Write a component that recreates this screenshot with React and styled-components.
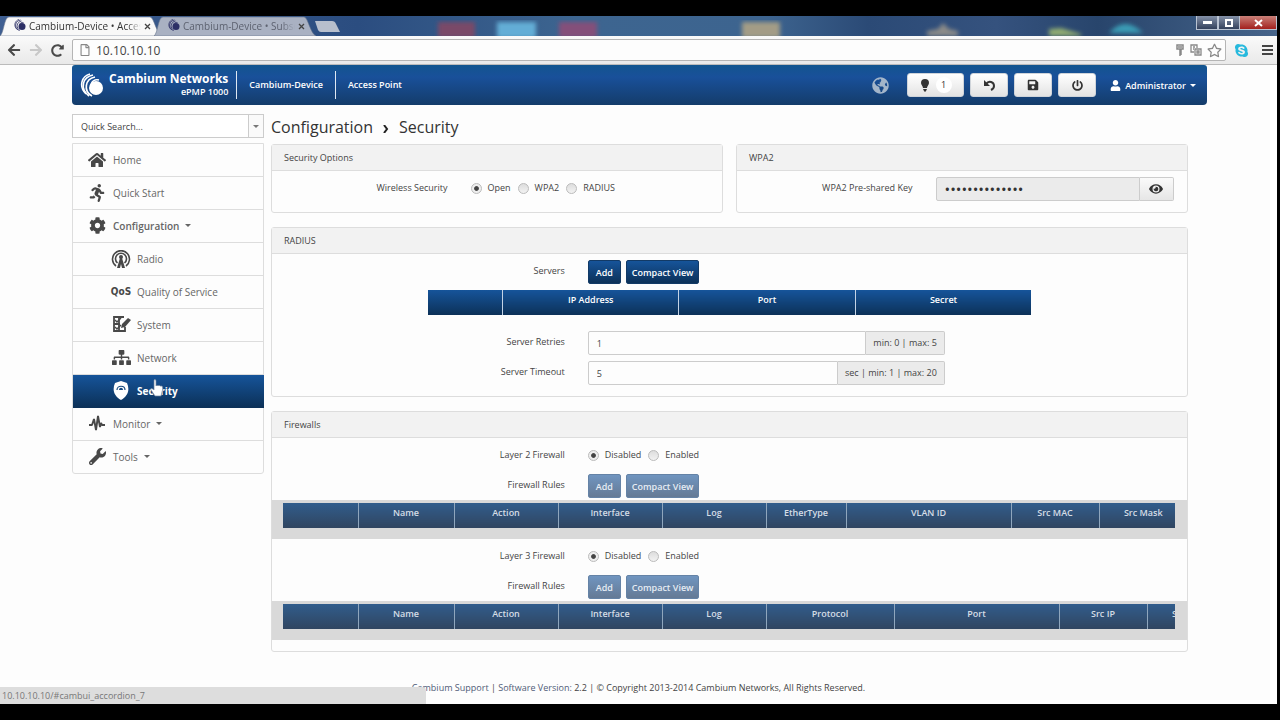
import React from 'react';
import styled, { createGlobalStyle, css } from 'styled-components';
import {
  FaArrowLeft, FaArrowRight, FaCog, FaEye, FaGlobeAmericas, FaHome, FaPowerOff,
  FaRedoAlt, FaRegFile, FaRegStar, FaRunning, FaSave, FaSitemap, FaSkype, FaUser, FaWrench,
} from 'react-icons/fa';

const GlobalStyle = createGlobalStyle`
  * {
    box-sizing: border-box;
  }
  body {
    margin: 0;
    background: #000;
    color: #444;
    font-family: "Open Sans", "Noto Sans", sans-serif;
    font-size: 9px;
  }
  button, input {
    font-family: inherit;
    font-size: inherit;
    color: inherit;
    margin: 0;
  }
  a {
    color: inherit;
    text-decoration: none;
  }
`;

const blue = 'linear-gradient(#16549a, #0c3158)';

const Window = styled.div`
  position: relative;
  display: flex;
  flex-direction: column;
  min-height: 100vh;
  border: solid #000;
  border-width: 16px 3px 16px 0;
  background: #fdfdfd;
`;

/* browser frame */
const TabStrip = styled.div`
  position: relative;
  display: flex;
  height: 20px;
  overflow: hidden;
  background: linear-gradient(90deg, #3f5f92 0%, #2b4d80 28%, #3d6590 45%, #3d648f 60%, #2b4a76 68%, #35527e 78%, #28456c 86%, #46648a 100%);
`;
const Desktop = styled.svg`
  position: absolute;
  left: 0;
  top: 0;
`;
const Tab = styled.a`
  position: relative;
  display: flex;
  align-items: center;
  width: 154px;
  height: 20px;
  padding: 0 3px 0 14px;
  gap: 3px;
  color: ${props => (props.$active ? '#333' : '#5d6270')};
`;
const TabShape = styled.svg`
  position: absolute;
  left: 0;
  top: 0;
`;
const TabTitle = styled.span`
  position: relative;
  flex: 1;
  overflow: hidden;
  white-space: nowrap;
  font-size: 10px;
  line-height: 18px;
  mask-image: linear-gradient(90deg, #000 88%, transparent);
`;
const TabIcon = styled.svg`
  position: relative;
  flex: none;
`;
const NewTab = styled.svg`
  position: relative;
  margin: 5px 0 0 7px;
`;
const WindowButtons = styled.div`
  position: absolute;
  right: 0;
  top: 0;
  display: flex;
`;
const WindowButton = styled.button`
  display: flex;
  align-items: center;
  justify-content: center;
  width: ${props => (props.$close ? 37 : 22)}px;
  height: 14px;
  padding: 0;
  border: 1px solid #b9c3d2;
  border-top: 0;
  border-left-width: ${props => (props.$close ? 0 : 1)}px;
  background: ${props => (props.$close ? 'linear-gradient(#c98078, #a3201d)' : 'linear-gradient(#8491a8, #33415c)')};
`;
const Toolbar = styled.div`
  display: flex;
  align-items: center;
  height: 29px;
  padding: 0 4px 0 7px;
  gap: 8px;
  border-bottom: 1px solid #bbb;
  background: linear-gradient(#fafafa, #e9e9e9);
`;
const Extensions = styled.div`
  display: flex;
  align-items: center;
  gap: 13px;
`;
const ToolButton = styled.button`
  display: flex;
  padding: 0;
  border: 0;
  background: none;
  color: ${props => props.$color || '#4a4a4a'};
`;
const AddressBox = styled.div`
  display: flex;
  flex: 1;
  align-items: center;
  height: 22px;
  padding: 0 3px 0 6px;
  gap: 5px;
  border: 1px solid #b5b5b5;
  border-radius: 2px;
  background: #fdfdfd;
  color: #888;
`;
const Address = styled.input`
  flex: 1;
  padding: 0;
  border: 0;
  background: none;
  color: #444;
  font-size: 12px;
`;

/* page header */
const Page = styled.div`
  margin: 0 70px 0 72px;
`;
const Header = styled.header`
  display: flex;
  align-items: center;
  height: 40px;
  padding: 0 11px 0 8px;
  border-radius: 3px 3px 4px 4px;
  background: linear-gradient(#12558f, #19509a 30%, #143c6a);
  color: #fff;
`;
const Brand = styled.div`
  display: flex;
  align-items: center;
  gap: 5px;
  padding-right: 8px;
`;
const BrandText = styled.div`
  text-align: right;
`;
const BrandName = styled.div`
  font-size: 12px;
  font-weight: 700;
  line-height: 14px;
`;
const BrandModel = styled.div`
  font-size: 9px;
  font-weight: 600;
  line-height: 12px;
`;
const HeaderItem = styled.div`
  padding: 0 12px;
  border-left: 1px solid #dfe8f3;
  font-weight: 600;
  line-height: 28px;
`;
const HeaderTools = styled.div`
  display: flex;
  align-items: center;
  gap: 6px;
  margin-left: auto;
`;
const HeaderButton = styled.button`
  display: flex;
  align-items: center;
  justify-content: center;
  gap: 6px;
  width: ${props => (props.$wide ? 57 : 38)}px;
  height: 24px;
  padding: 0;
  border: 1px solid #cfd4da;
  border-radius: 3px;
  background: linear-gradient(#fff, #e3e3e3);
  color: #333;
`;
const Count = styled.span`
  width: 16px;
  border-radius: 8px;
  background: #fff;
  line-height: 16px;
`;
const Globe = styled(FaGlobeAmericas)`
  margin-right: 12px;
  color: #a3b5c9;
`;
const UserMenu = styled.button`
  display: flex;
  align-items: center;
  gap: 4px;
  margin-left: 8px;
  padding: 0;
  border: 0;
  background: none;
  color: #fff;
  font-weight: 600;
`;
const Caret = styled.span`
  border: solid transparent;
  border-width: 3px 3px 0;
  border-top-color: currentColor;
`;

/* columns */
const Columns = styled.div`
  display: grid;
  grid-template-columns: 192px 1fr;
  gap: 7px;
  padding-right: 19px;
`;
const Search = styled.div`
  display: flex;
  height: 24px;
  margin: 9px 0 5px;
  border: 1px solid #ccc;
  background: #fff;
`;
const SearchInput = styled.input`
  flex: 1;
  min-width: 0;
  padding: 0 8px;
  border: 0;
  background: none;
  &::placeholder {
    color: #444;
    opacity: 1;
  }
`;
const SearchButton = styled.button`
  display: flex;
  align-items: center;
  justify-content: center;
  width: 15px;
  padding: 0;
  border: 0;
  border-left: 1px solid #ccc;
  background: #fafafa;
  color: #777;
`;
const Menu = styled.nav`
  border: 1px solid #ddd;
  border-radius: 0 0 3px 3px;
`;
const MenuItem = styled.a`
  position: relative;
  display: flex;
  align-items: center;
  gap: 6px;
  height: 33px;
  padding: 0 0 1px ${props => (props.$sub ? 38 : 14)}px;
  border-bottom: 1px solid #ddd;
  color: #666;
  font-size: 10px;
  font-weight: ${props => (props.$bold ? 600 : 400)};
  &:last-child {
    height: 32px;
    border-bottom: 0;
  }
  ${props => props.$active && css`
    margin-right: -1px;
    border-color: #0c3158;
    background: ${blue};
    color: #fff;
    font-weight: 700;
  `}
`;
const MenuIcon = styled.span`
  display: flex;
  justify-content: center;
  width: 20px;
  color: ${props => (props.$active ? '#fff' : '#484848')};
`;
const QosMark = styled.b`
  font-family: "DejaVu Sans Condensed", "Liberation Sans", sans-serif;
  font-size: 10px;
  line-height: 16px;
`;
const Hand = styled.svg`
  position: absolute;
  left: 77px;
  top: 4px;
`;

/* panels and forms */
const Title = styled.h1`
  margin: 11px 0 5px;
  color: #333;
  font-size: 16px;
  font-weight: 400;
  line-height: 23px;
`;
const Chevron = styled.svg`
  margin: 0 10px;
`;
const Panels = styled.div`
  display: grid;
  grid-template-columns: 1fr 1fr;
  gap: 14px 13px;
`;
const Panel = styled.section`
  grid-column: ${props => (props.$half ? 'auto' : '1 / -1')};
  min-width: 0;
  border: 1px solid #ddd;
  border-radius: 3px;
  --label: ${props => (props.$half ? '39%' : '32%')};
  --field: ${props => (props.$half ? '238px' : '357px')};
`;
const PanelTitle = styled.h2`
  margin: 0;
  padding: 0 12px;
  border-bottom: 1px solid #ddd;
  background: #f2f2f2;
  color: #444;
  font-size: 9px;
  font-weight: 400;
  line-height: 25px;
`;
const PanelBody = styled.div`
  display: flex;
  flex-direction: column;
  gap: 6px;
  padding: 6px 0 11px;
`;
const Row = styled.div`
  display: grid;
  grid-template-columns: var(--label) 1fr;
  gap: 23px;
  min-height: 24px;
`;
const Label = styled.label`
  line-height: 22px;
  text-align: right;
`;
const Field = styled.div`
  display: flex;
  width: var(--field);
  height: 24px;
`;
const Input = styled.input`
  flex: 1;
  min-width: 0;
  padding: 0 8px;
  border: 1px solid #ccc;
  border-radius: 2px 0 0 2px;
  background: #fdfdfd;
  &:disabled {
    background: #ebebeb;
    color: #333;
  }
  &[type='password'] {
    font-size: 15px;
  }
`;
const Hint = styled.span`
  padding: 0 7px;
  border: 1px solid #ccc;
  border-left: 0;
  border-radius: 0 2px 2px 0;
  background: #ebebeb;
  line-height: 22px;
`;
const EyeButton = styled.button`
  display: flex;
  align-items: center;
  justify-content: center;
  width: 34px;
  border: 1px solid #ccc;
  border-left: 0;
  border-radius: 0 2px 2px 0;
  background: linear-gradient(#fafafa, #e6e6e6);
  color: #333;
`;
const Choices = styled.div`
  display: flex;
  gap: 7px;
  line-height: 22px;
`;
const Choice = styled.label`
  display: flex;
  align-items: center;
  gap: 6px;
  height: 22px;
`;
const Radio = styled.input`
  width: 11px;
  height: 11px;
  appearance: none;
  border: 1px solid #bbb;
  border-radius: 50%;
  background: linear-gradient(#ddd, #f2f2f2);
  &:checked {
    background: radial-gradient(#444 30%, #eee 45%);
  }
`;
const Buttons = styled.div`
  display: flex;
  gap: 5px;
`;
const Button = styled.button`
  min-width: 33px;
  height: 24px;
  padding: 0 5px;
  border: 1px solid #123a66;
  border-radius: 2px;
  background: ${blue};
  color: #fff;
  font-weight: 600;
  &:disabled {
    border-color: #6583a6;
    background: linear-gradient(#7095c0, #657a95);
    color: #e6edf5;
  }
`;
const TableWrap = styled.div`
  width: 66%;
  margin: 0 auto 10px;
`;
const DisabledWrap = styled.div`
  padding: 3px 12px 11px 11px;
  margin-top: -4px;
  background: #d9d9d9;
`;
const Clip = styled.div`
  overflow: hidden;
`;
const Table = styled.table`
  width: 100%;
  table-layout: fixed;
  border-collapse: collapse;
`;
const Th = styled.th`
  width: ${props => (props.$width ? `${props.$width}px` : 'auto')};
  height: 25px;
  padding: 0 0 6px;
  border-left: 1px solid ${props => (props.$off ? '#8fa6bd' : '#c3d3e6')};
  background: ${props => (props.$off ? 'linear-gradient(#315d8c, #304560)' : blue)};
  color: ${props => (props.$off ? '#d5dde6' : '#fff')};
  font-weight: 600;
  line-height: 18px;
  &:first-child {
    border-left: 0;
  }
`;
const Footer = styled.footer`
  margin-top: 28px;
  padding-bottom: 7px;
  line-height: 16px;
  text-align: center;
`;
const FooterLink = styled.a`
  color: #505c78;
`;
const Status = styled.div`
  position: absolute;
  left: 0;
  bottom: 0;
  width: 426px;
  padding-left: 2px;
  border-radius: 0 4px 0 0;
  background: #ddd;
  color: #777;
  line-height: 17px;
`;

const Swirl = ({ size, color }) => (
  <svg width={size} height={size} viewBox="0 0 24 24" fill="none" stroke={color}>
    <circle cx="16" cy="15" r="7" fill={color} stroke="none" />
    <path d="M12 23C3 18 5 6 15 4" strokeWidth="1.7" />
    <path d="M9 23C-1 15 3 4 13 2" strokeWidth="1.7" />
    <path d="M6 21C-2 13 2 3 10 1" strokeWidth="1.5" />
    <path d="M11 13c0-5 4-7 8-6" strokeWidth="1.5" />
  </svg>
);

const BulbIcon = () => (
  <svg width="10" height="13" viewBox="0 0 10 13" fill="currentColor">
    <path d="M5 0a4 4 0 0 1 4 4c0 2-2 3-2 5H3C3 7 1 6 1 4a4 4 0 0 1 4-4zM3 10h4l-1 2-1 1-1-1z" />
  </svg>
);

const UndoIcon = () => (
  <svg width="12" height="12" viewBox="0 0 12 12">
    <path d="M1 1v6h6z" fill="currentColor" />
    <path d="M3 5c3-4 8-2 8 2 0 2-1 3-3 4" fill="none" stroke="currentColor" strokeWidth="2" />
  </svg>
);

const RadioIcon = () => (
  <svg width="20" height="18" viewBox="0 0 20 18" fill="none" stroke="currentColor" strokeWidth="1.6">
    <path d="M5 16A8.5 8.5 0 1 1 15 16M6.5 13A5.5 5.5 0 1 1 13.5 13" />
    <circle cx="10" cy="7" r="2" fill="currentColor" stroke="none" />
    <path d="M9 8h2l3 10h-3l-1-4-1 4H6z" fill="currentColor" stroke="none" />
  </svg>
);

const SystemIcon = () => (
  <svg width="19" height="17" viewBox="0 0 19 17" fill="none" stroke="currentColor" strokeWidth="1.8">
    <path d="M12 1H2v14h11v-4M2 8h6M7 1v14" />
    <path d="M3 4l2 2 4-4M3 11l2 2 4-4" strokeWidth="1.4" />
    <path d="M9 12l1-4 6-6 3 2-6 7z" fill="currentColor" stroke="none" />
  </svg>
);

const ShieldIcon = () => (
  <svg width="16" height="19" viewBox="0 0 16 19">
    <path d="M8 0c2 1 4 1 6 2 3 7 1 13-6 17C1 15-1 9 2 2c2-1 4-1 6-2z" fill="currentColor" />
    <path d="M4 9c0-5 8-5 8 0" fill="none" stroke="#174a80" strokeWidth="1.2" />
    <path d="M6 9c0-3 4-3 4 0z" fill="#174a80" />
  </svg>
);

const PulseIcon = () => (
  <svg width="16" height="17" viewBox="0 0 16 17" fill="none" stroke="currentColor" strokeWidth="1.9">
    <path d="M0 10h3l2-6 2 11L9 1l2 11 1-4 1 2h3" strokeLinejoin="bevel" />
  </svg>
);

const MenuHand = () => (
  <Hand width="14" height="18" viewBox="0 0 14 18">
    <path
      d="M4 1c1-1 2 0 2 1v5l1-1 1 1 1-1 1 1 2 0c1 1 1 3 0 6l-1 4H5l-4-6c-1-2 1-2 3 0z"
      fill="#fff"
      stroke="#6b7f98"
      strokeWidth="0.7"
    />
  </Hand>
);

const BrowserTab = ({ title, active }) => (
  <Tab href="#" $active={active}>
    <TabShape width="170" height="20">
      <path d="M0 20C4 17 4 1 9 1h141c4 0 6 16 12 19z" fill={active ? '#f8f8f8' : '#a9b1c2'} stroke="#66748c" strokeWidth="0.6" />
    </TabShape>
    <TabIcon as="span"><Swirl size={12} color="#2c2f66" /></TabIcon>
    <TabTitle>{title}</TabTitle>
    <TabIcon width="7" height="7" viewBox="0 0 7 7"><path d="M1 1l5 5M6 1L1 6" stroke="#444" strokeWidth="1.3" /></TabIcon>
  </Tab>
);

const menu = [
  { label: 'Home', icon: <FaHome size={18} /> },
  { label: 'Quick Start', icon: <FaRunning size={18} /> },
  { label: 'Configuration', icon: <FaCog size={17} />, bold: true, caret: true },
  { label: 'Radio', icon: <RadioIcon />, sub: true },
  { label: 'Quality of Service', icon: <QosMark>QoS</QosMark>, sub: true },
  { label: 'System', icon: <SystemIcon />, sub: true },
  { label: 'Network', icon: <FaSitemap size={19} />, sub: true },
  { label: 'Security', icon: <ShieldIcon />, sub: true, active: true },
  { label: 'Monitor', icon: <PulseIcon />, caret: true },
  { label: 'Tools', icon: <FaWrench size={17} />, caret: true },
];

const layer2 = [['', 75], ['Name', 96], ['Action', 104], ['Interface', 104], ['Log', 104], ['EtherType', 80], ['VLAN ID', 165], ['Src MAC', 88], ['Src Mask', 88]];
const layer3 = [['', 75], ['Name', 96], ['Action', 104], ['Interface', 104], ['Log', 104], ['Protocol', 128], ['Port', 165], ['Src IP', 88], ['Src Mask', 88]];

const HeadTable = ({ columns, off }) => (
  <Table>
    <thead>
      <tr>
        {columns.map(([name, width], i) => (
          <Th key={i} $width={width} $off={off}>{name}</Th>
        ))}
      </tr>
    </thead>
  </Table>
);

const RadioRow = ({ label, name, options }) => (
  <Row>
    <Label as="span" id={name}>{label}</Label>
    <Choices role="radiogroup" aria-labelledby={name}>
      {options.map((option, i) => (
        <Choice key={option}>
          <Radio type="radio" name={name} defaultChecked={i === 0} />
          {option}
        </Choice>
      ))}
    </Choices>
  </Row>
);

const ButtonRow = ({ label, disabled }) => (
  <Row>
    <Label as="span">{label}</Label>
    <Buttons>
      <Button disabled={disabled}>Add</Button>
      <Button disabled={disabled}>Compact View</Button>
    </Buttons>
  </Row>
);

const NumberRow = ({ id, label, value, hint }) => (
  <Row>
    <Label htmlFor={id}>{label}</Label>
    <Field>
      <Input id={id} defaultValue={value} />
      <Hint>{hint}</Hint>
    </Field>
  </Row>
);

const Firewall = ({ layer, columns }) => (
  <>
    <RadioRow label={`Layer ${layer} Firewall`} name={`layer${layer}`} options={['Disabled', 'Enabled']} />
    <ButtonRow label="Firewall Rules" disabled />
    <DisabledWrap>
      <Clip>
        <HeadTable columns={columns} off />
      </Clip>
    </DisabledWrap>
  </>
);

const App = () => (
  <>
    <GlobalStyle />
    <Window>
      <TabStrip>
        <Desktop width="1277" height="20">
          <defs>
            <filter id="soft"><feGaussianBlur stdDeviation="2" /></filter>
          </defs>
          <g filter="url(#soft)">
            <rect x="438" y="6" width="37" height="16" fill="#7a4868" />
            <rect x="497" y="6" width="39" height="16" fill="#63add6" />
            <rect x="559" y="6" width="38" height="16" fill="#84507a" />
            <rect x="742" y="6" width="38" height="16" fill="#a39c86" />
            <path d="M927 20v-5l11-2 5-6 6 6 9 2v5z" fill="#8b8b88" />
            <path d="M1049 20v-7l12-1 20 6v2z" fill="#92ad72" />
            <path d="M1109 17q16-18 34 0z" fill="#3a9bb5" />
          </g>
        </Desktop>
        <BrowserTab title="Cambium-Device • Access Point" active />
        <BrowserTab title="Cambium-Device • Subscriber" />
        <NewTab width="28" height="12">
          <path d="M0 0h17q3 0 4 3l4 8H6q-2 0-3-2z" fill="#b7bfcd" />
        </NewTab>
        <WindowButtons>
          <WindowButton aria-label="Minimize"><svg width="9" height="3"><path d="M0 0h9v3H0z" fill="#fff" /></svg></WindowButton>
          <WindowButton aria-label="Restore"><svg width="8" height="8"><path d="M1 1h6v6H1z" fill="none" stroke="#fff" strokeWidth="2" /></svg></WindowButton>
          <WindowButton aria-label="Close" $close>
            <svg width="9" height="8"><path d="M1 1l7 6M8 1L1 7" stroke="#fff" strokeWidth="2" /></svg>
          </WindowButton>
        </WindowButtons>
      </TabStrip>
      <Toolbar>
        <ToolButton aria-label="Back"><FaArrowLeft size={14} /></ToolButton>
        <ToolButton aria-label="Forward" $color="#c8c8c8"><FaArrowRight size={14} /></ToolButton>
        <ToolButton aria-label="Reload"><FaRedoAlt size={13} /></ToolButton>
        <AddressBox>
          <FaRegFile size={12} />
          <Address aria-label="Address" defaultValue="10.10.10.10" />
          <svg width="9" height="13" viewBox="0 0 9 13" fill="none" stroke="currentColor" strokeWidth="1.5">
            <path d="M1 1h6v4H1zM2 3h4M4 5v7M5 5v6" />
          </svg>
          <svg width="12" height="12" viewBox="0 0 12 12" fill="none" stroke="currentColor" strokeWidth="1.3">
            <path d="M7 4V1H1v7h3M3 3h2M3 5h1M5 5h6v6H5zM7 7h2v2H7z" />
          </svg>
          <FaRegStar size={15} />
        </AddressBox>
        <Extensions>
          <ToolButton aria-label="Skype" $color="#27b9dd"><FaSkype size={15} /></ToolButton>
          <ToolButton aria-label="Menu">
            <svg width="11" height="11"><path d="M0 1h11M0 5h11M0 9h11" stroke="#444" strokeWidth="2" /></svg>
          </ToolButton>
        </Extensions>
      </Toolbar>

      <Page>
        <Header>
          <Brand>
            <Swirl size={24} color="#fff" />
            <BrandText>
              <BrandName>Cambium Networks</BrandName>
              <BrandModel>ePMP 1000</BrandModel>
            </BrandText>
          </Brand>
          <HeaderItem>Cambium-Device</HeaderItem>
          <HeaderItem>Access Point</HeaderItem>
          <HeaderTools>
            <Globe size={17} />
            <HeaderButton $wide aria-label="Notifications"><BulbIcon /><Count>1</Count></HeaderButton>
            <HeaderButton aria-label="Undo"><UndoIcon /></HeaderButton>
            <HeaderButton aria-label="Save"><FaSave size={12} /></HeaderButton>
            <HeaderButton aria-label="Power"><FaPowerOff size={11} /></HeaderButton>
            <UserMenu><FaUser size={11} />Administrator<Caret /></UserMenu>
          </HeaderTools>
        </Header>

        <Columns>
          <div>
            <Search>
              <SearchInput aria-label="Quick Search" placeholder="Quick Search..." />
              <SearchButton aria-label="Show options"><Caret /></SearchButton>
            </Search>
            <Menu>
              {menu.map(item => (
                <MenuItem key={item.label} href="#" $sub={item.sub} $bold={item.bold} $active={item.active}>
                  <MenuIcon $active={item.active}>{item.icon}</MenuIcon>
                  <span>{item.label}</span>
                  {item.caret && <Caret />}
                  {item.active && <MenuHand />}
                </MenuItem>
              ))}
            </Menu>
          </div>

          <main>
            <Title>
              Configuration
              <Chevron width="6" height="8" viewBox="0 0 6 8">
                <path d="M1 0l3 4-3 4" fill="none" stroke="#222" strokeWidth="2" />
              </Chevron>
              Security
            </Title>
            <Panels>
              <Panel $half>
                <PanelTitle>Security Options</PanelTitle>
                <PanelBody>
                  <RadioRow label="Wireless Security" name="wireless" options={['Open', 'WPA2', 'RADIUS']} />
                </PanelBody>
              </Panel>
              <Panel $half>
                <PanelTitle>WPA2</PanelTitle>
                <PanelBody>
                  <Row>
                    <Label htmlFor="psk">WPA2 Pre-shared Key</Label>
                    <Field>
                      <Input id="psk" type="password" defaultValue="cambiumnetwork" disabled />
                      <EyeButton aria-label="Show key"><FaEye size={14} /></EyeButton>
                    </Field>
                  </Row>
                </PanelBody>
              </Panel>
              <Panel>
                <PanelTitle>RADIUS</PanelTitle>
                <PanelBody>
                  <ButtonRow label="Servers" />
                  <TableWrap>
                    <HeadTable columns={[['', 75], ['IP Address'], ['Port'], ['Secret']]} />
                  </TableWrap>
                  <NumberRow id="retries" label="Server Retries" value="1" hint="min: 0 | max: 5" />
                  <NumberRow id="timeout" label="Server Timeout" value="5" hint="sec | min: 1 | max: 20" />
                </PanelBody>
              </Panel>
              <Panel>
                <PanelTitle>Firewalls</PanelTitle>
                <PanelBody>
                  <Firewall layer={2} columns={layer2} />
                  <Firewall layer={3} columns={layer3} />
                </PanelBody>
              </Panel>
            </Panels>
          </main>
        </Columns>
      </Page>

      <Footer>
        <FooterLink href="#">Cambium Support</FooterLink> | <FooterLink href="#">Software Version:</FooterLink> 2.2 | © Copyright 2013-2014 Cambium Networks, All Rights Reserved.
      </Footer>
      <Status>10.10.10.10/#cambui_accordion_7</Status>
    </Window>
  </>
);

export default App;
